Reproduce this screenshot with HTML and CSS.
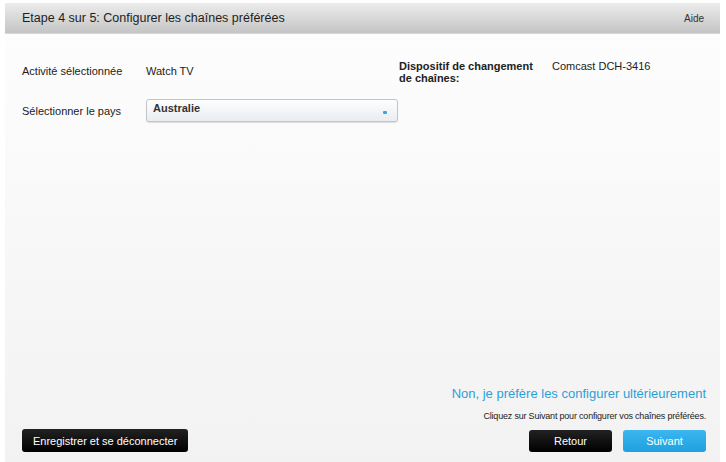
FILE: index.html
```html
<!DOCTYPE html>
<html lang="fr">
<head>
  <meta charset="UTF-8">
  <meta name="viewport" content="width=device-width, initial-scale=1.0">
  <title>Configurer les chaînes préférées</title>
  <link rel="stylesheet" href="styles.css">
</head>
<body>

  <div class="wizard">
    <div class="title-bar">
      <span class="title">Etape 4 sur 5: Configurer les chaînes préférées</span>
      <span class="help">Aide</span>
    </div>

    <div class="content">
      <div class="info-row">
        <div class="field">
          <span class="label">Activité sélectionnée</span>
          <span class="value">Watch TV</span>
        </div>
        <div class="field device">
          <span class="label bold">Dispositif de changement de chaînes:</span>
          <span class="value">Comcast DCH-3416</span>
        </div>
      </div>

      <div class="field country">
        <span class="label">Sélectionner le pays</span>
        <div class="select">
          <span>Australie</span>
          <span class="arrow"></span>
        </div>
      </div>

      <div class="spacer"></div>

      <div class="later">
        <a class="later-link">Non, je préfère les configurer ultérieurement</a>
        <p class="hint">Cliquez sur Suivant pour configurer vos chaînes préférées.</p>
      </div>

      <div class="actions">
        <button class="btn dark">Enregistrer et se déconnecter</button>
        <div class="nav">
          <button class="btn dark wide">Retour</button>
          <button class="btn blue wide">Suivant</button>
        </div>
      </div>
    </div>
  </div>

</body>
</html>
```

FILE: styles.css
```css
body {
  margin: 0;
  font-family: "Liberation Sans", Arial, sans-serif;
  font-size: 11px;
  color: #222;
  background: #fff;
}
.wizard {
  margin: 3px 6px 0 5px;
  height: 459px;
  display: flex;
  flex-direction: column;
}
.title-bar {
  height: 30px;
  display: flex;
  align-items: center;
  justify-content: space-between;
  padding: 0 16px 0 17px;
  background: linear-gradient(#ececec, #c4c4c4);
  border-bottom: 1px solid #d8d8d8;
}
.title {
  font-size: 12.5px;
  color: #1e1e1e;
}
.help {
  font-size: 10px;
  color: #333;
}
.content {
  flex: 1;
  display: flex;
  flex-direction: column;
  padding: 26px 14px 10px 17px;
  background: linear-gradient(#fdfdfd, #f2f2f2);
}
.info-row {
  display: flex;
}
.field {
  display: flex;
  align-items: flex-start;
}
.label {
  width: 124px;
  line-height: 12px;
}
.value {
  line-height: 12px;
}
.info-row .field:first-child {
  width: 377px;
  padding-top: 5px;
}
.device .label {
  width: 153px;
  padding-right: 14px;
  box-sizing: border-box;
}
.bold {
  font-weight: bold;
}
.country {
  align-items: center;
  margin-top: 15px;
}
.select {
  width: 252px;
  height: 23px;
  box-sizing: border-box;
  padding: 0 10px 0 6px;
  display: flex;
  justify-content: space-between;
  align-items: center;
  border: 1px solid #c4c4c4;
  border-radius: 3px;
  background: linear-gradient(#fefefe, #e9edf1);
  box-shadow: 0 1px 1px rgba(0, 0, 0, 0.12);
  font-weight: bold;
  color: #333;
}
.select span:first-child {
  margin-top: -5px;
}
.arrow {
  width: 4px;
  height: 3px;
  margin-top: 3px;
  background: #3aa6dc;
  border-radius: 1px;
}
.spacer {
  flex: 1;
}
.later {
  text-align: right;
}
.later-link {
  font-size: 13px;
  color: #2d9fd8;
}
.hint {
  margin: 10px 0 0;
  font-size: 9px;
  letter-spacing: -0.2px;
}
.actions {
  display: flex;
  justify-content: space-between;
  align-items: flex-end;
  margin-top: 8px;
}
.nav {
  display: flex;
  gap: 11px;
}
.btn {
  height: 22px;
  padding: 0 11px;
  border: none;
  border-radius: 3px;
  font-family: inherit;
  font-size: 11px;
  color: #fff;
  cursor: pointer;
}
.dark {
  background: linear-gradient(#222, #000);
  height: 23px;
}
.wide {
  width: 83px;
  height: 22px;
}
.blue {
  background: linear-gradient(#3bb6ef, #1fa0e0);
}
```
